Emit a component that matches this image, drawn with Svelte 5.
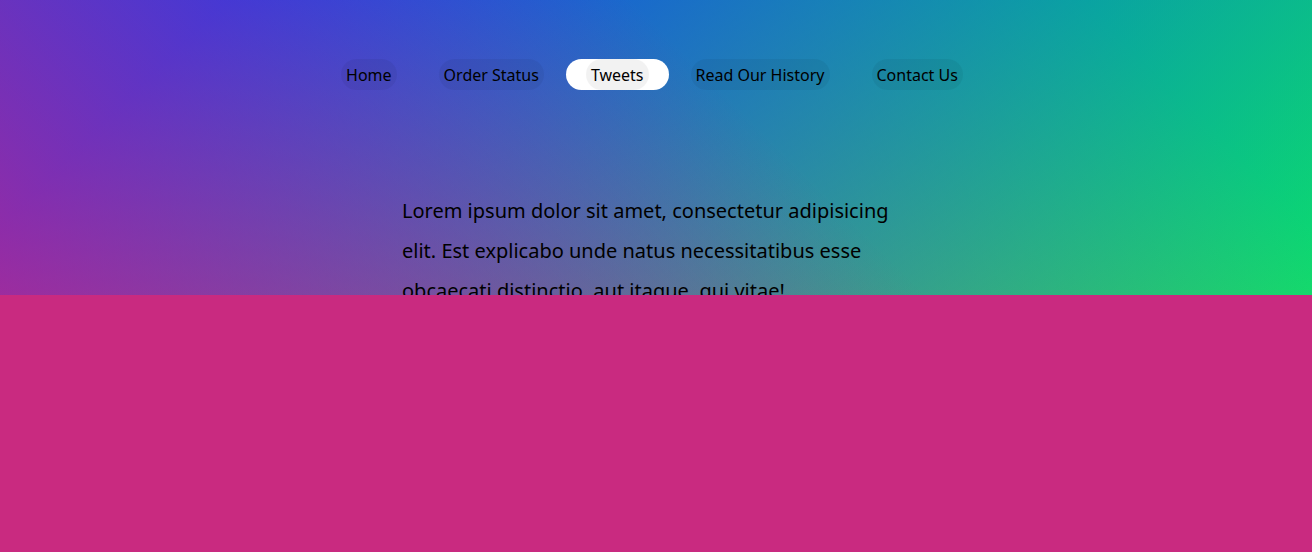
<script>
  const links = ['Home', 'Order Status', 'Tweets', 'Read Our History', 'Contact Us'];
  let active = $state('Tweets');
</script>

<div class="page">
  <div class="hero">
    <nav aria-label="Main">
      <ul>
        {#each links as link}
          <li class:active={link === active}>
            <a href="#top" onmouseenter={() => (active = link)}>{link}</a>
          </li>
        {/each}
      </ul>
    </nav>
    <p>
      Lorem ipsum dolor sit amet, consectetur adipisicing elit. Est explicabo unde natus
      necessitatibus esse obcaecati distinctio, aut itaque, qui vitae!
    </p>
  </div>
</div>

<style>
  :global(body) {
    margin: 0;
    background: #c92a80;
  }

  .page {
    min-height: 100vh;
    color: #000;
    font-family: "Noto Sans", "Segoe UI", sans-serif;
  }

  .hero {
    box-sizing: border-box;
    height: 295px;
    overflow: hidden;
    padding: 59px 8px 0 0;
    background:
      linear-gradient(45deg, hsla(340, 100%, 55%, 1) 0%, hsla(340, 100%, 55%, 0) 70%),
      linear-gradient(135deg, hsla(225, 95%, 50%, 1) 10%, hsla(225, 95%, 50%, 0) 80%),
      linear-gradient(225deg, hsla(140, 90%, 50%, 1) 10%, hsla(140, 90%, 50%, 0) 80%),
      linear-gradient(315deg, hsla(35, 95%, 55%, 1) 100%, hsla(35, 95%, 55%, 0) 70%);
    background-size: 100% 950px;
    background-repeat: no-repeat;
  }

  ul {
    display: flex;
    justify-content: center;
    gap: 2px;
    margin: 0;
    padding: 0;
    list-style: none;
  }

  li {
    padding: 0 20px;
    border-radius: 20px;
  }

  .active {
    background: #fff;
  }

  a {
    display: block;
    padding: 6px 5px 4px;
    border-radius: 20px;
    background: rgba(0, 0, 0, 0.05);
    color: inherit;
    font-size: 16px;
    line-height: 21px;
    text-decoration: none;
    white-space: nowrap;
  }

  p {
    max-width: 500px;
    margin: 101px auto 0;
    font-size: 20px;
    line-height: 40px;
  }
</style>
